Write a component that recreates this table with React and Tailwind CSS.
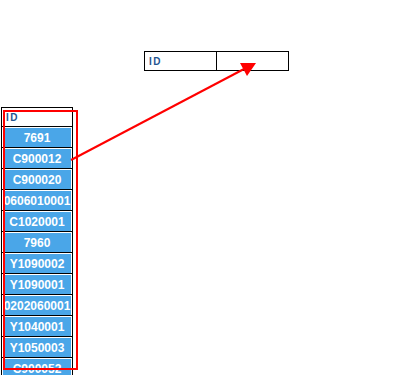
import React from 'react';

const ids = [
  '7691', 'C900012', 'C900020', '0606010001', 'C1020001', '7960',
  'Y1090002', 'Y1090001', '0202060001', 'Y1040001', 'Y1050003', 'C900052',
];

const App = () => {
  return (
    <div className="relative w-[399px] h-[375px] overflow-hidden bg-white" style={{ fontFamily: '"Liberation Sans", Arial, sans-serif' }}>
      {/* target table */}
      <div className="ml-[144px] pt-[51px]">
        <div className="flex w-[145px] h-[20px] border border-black">
          <div className="w-[72px] border-r border-black pl-[4px] flex items-center text-[10px] font-bold tracking-[1.5px] text-[#1f5590]">ID</div>
          <div className="flex-1"></div>
        </div>
      </div>

      {/* source column */}
      <div className="mt-[36px] ml-[1px] w-[72px] border border-black">
        <div className="h-[18px] pl-[4px] flex items-center text-[10px] font-bold tracking-[1.5px] text-[#1f5590]">ID</div>
        {ids.map((id) => (
          <div key={id} className="border-t border-black pt-[1px] px-[1px]">
            <div className="h-[19px] bg-[#4aa6e8] flex justify-center items-center overflow-hidden text-white font-bold text-[12px] whitespace-nowrap">
              {id}
            </div>
          </div>
        ))}
      </div>

      {/* selection frame */}
      <div className="absolute left-[3px] top-[110px] w-[75px] h-[260px] border-2 border-[#ff0000]"></div>

      {/* arrow */}
      <svg className="absolute left-0 top-0" width="399" height="375">
        <line x1="71" y1="160" x2="244" y2="69" stroke="#ff0000" strokeWidth="2" />
        <polygon points="256,63 240,63 247,76" fill="#ff0000" />
      </svg>
    </div>
  );
};

export default App;
